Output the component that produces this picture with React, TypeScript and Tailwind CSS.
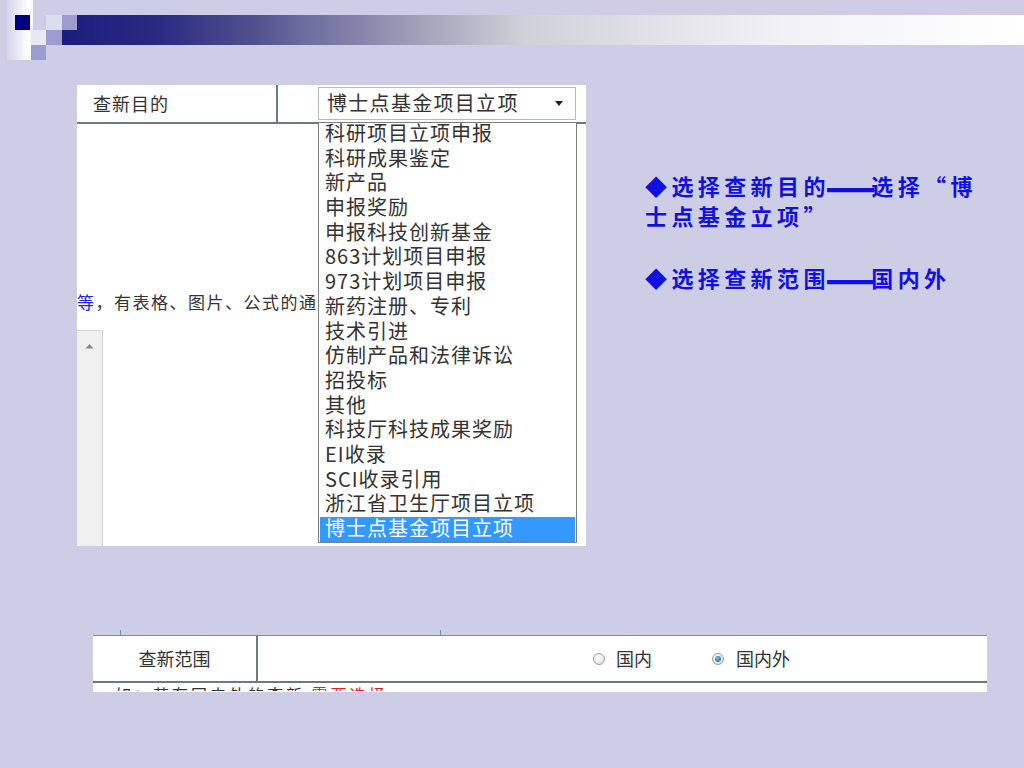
import React from "react";

const items = [
  "科研项目立项申报",
  "科研成果鉴定",
  "新产品",
  "申报奖励",
  "申报科技创新基金",
  "863计划项目申报",
  "973计划项目申报",
  "新药注册、专利",
  "技术引进",
  "仿制产品和法律诉讼",
  "招投标",
  "其他",
  "科技厅科技成果奖励",
  "EI收录",
  "SCI收录引用",
  "浙江省卫生厅项目立项",
  "博士点基金项目立项",
];

function Header() {
  return (
    <svg width="1024" height="60" viewBox="0 0 1024 60" className="block">
      <defs>
        <linearGradient id="strip" x1="0" y1="0" x2="1" y2="0">
          <stop offset="0" stopColor="#d4d4ec" />
          <stop offset="0.85" stopColor="#ffffff" />
          <stop offset="1" stopColor="#f4f4fa" />
        </linearGradient>
        <linearGradient id="bar" gradientUnits="userSpaceOnUse" x1="62" y1="0" x2="1024" y2="0">
          <stop offset="0" stopColor="#1c1c7e" />
          <stop offset="0.1" stopColor="#2a2a82" />
          <stop offset="0.2" stopColor="#50508f" />
          <stop offset="0.25" stopColor="#6b6b9f" />
          <stop offset="0.36" stopColor="#9c9cb6" />
          <stop offset="0.48" stopColor="#d0d0d8" />
          <stop offset="0.75" stopColor="#f2f2f6" />
          <stop offset="1" stopColor="#ffffff" />
        </linearGradient>
      </defs>
      <rect x="7" y="0" width="26" height="60" fill="url(#strip)" />
      <rect x="15" y="15" width="15" height="15" fill="#000080" />
      <rect x="46" y="15" width="16" height="15" fill="#dcdcef" />
      <rect x="62" y="15" width="15" height="15" fill="#9c9ccf" />
      <rect x="31" y="30" width="15" height="15" fill="#e8e8f4" />
      <rect x="46" y="30" width="16" height="15" fill="#9c9ccf" />
      <rect x="31" y="45" width="15" height="15" fill="#9c9ccf" />
      <rect x="77" y="15" width="947" height="15" fill="url(#bar)" />
      <rect x="62" y="30" width="962" height="15" fill="url(#bar)" />
    </svg>
  );
}

function Radio({ checked }: { checked?: boolean }) {
  return (
    <span className="inline-flex items-center justify-center w-[12px] h-[12px] rounded-full border border-[#9aa0a6] bg-[radial-gradient(circle_at_40%_35%,#ffffff,#d8d8d8)]">
      {checked && (
        <span className="w-[6px] h-[6px] rounded-full bg-[radial-gradient(circle_at_40%_35%,#7fb2e8,#1f5fa8)]" />
      )}
    </span>
  );
}

function Dash() {
  return (
    <span className="inline-block tracking-[0px] mx-[2px] scale-x-[1.35] scale-y-[2] -translate-y-[2px]">——</span>
  );
}

export default function App() {
  const cjk = { fontFamily: '"Noto Sans CJK SC", "Liberation Sans", sans-serif' };
  return (
    <div
      lang="zh-CN"
      className="w-[1024px] h-[768px] bg-[#cdcde6] overflow-hidden"
      style={cjk}
    >
      <Header />
      <div className="flex pt-[25px]">
        {/* left screenshot panel */}
        <div className="ml-[77px] w-[509px] h-[461px] bg-white relative flex flex-col">
          <div className="flex h-[39px] border-b-2 border-[#6b7b80]">
            <div className="w-[201px] border-r-2 border-[#6b7b80] pl-[16px] flex items-center text-[18px] tracking-[1px] text-[#333] leading-none pb-[2px]">
              查新目的
            </div>
          </div>
          <div className="h-[166px]" />
          <div className="text-[17px] leading-[24px] text-[#333] whitespace-nowrap overflow-hidden w-[241px] tracking-[1.5px]">
            <span className="text-[#2020d8]">等</span>，有表格、图片、公式的通
          </div>
          <div className="h-[16px]" />
          <div className="flex-1 flex">
            <div className="w-[26px] bg-[#f0f0f0] border-t border-r border-[#d4d4d4] flex justify-center pt-[12px]">
              <svg width="9" height="6" viewBox="0 0 9 6">
                <path d="M0.5 5.5 L4.5 1 L8.5 5.5 Z" fill="#8a8a8a" />
              </svg>
            </div>
          </div>

          {/* select box */}
          <div className="absolute left-[241px] top-[2px] w-[258px] h-[33px] border border-[#aebccb] bg-white flex items-center pl-[8px] pr-[12px] text-[20px] text-[#333]">
            <span className="flex-1 tracking-[1.3px] -mt-[2px]">博士点基金项目立项</span>
            <svg width="8" height="5" viewBox="0 0 8 5">
              <path d="M0 0 H8 L4 5 Z" fill="#222" />
            </svg>
          </div>

          {/* dropdown list */}
          <div className="absolute left-[241px] top-[37px] w-[259px] h-[421px] border border-[#7d7d7d] bg-white px-px">
            <div className="-mt-[1px]">
              {items.map((it, i) => (
                <div
                  key={it}
                  className={
                    "h-[24.7px] leading-[24.7px] pl-[5px] text-[20px] tracking-[1px] whitespace-nowrap " +
                    (i === items.length - 1 ? "bg-[#3399ff] text-white" : "text-[#333]")
                  }
                >
                  <span className="relative -top-[1px]">{it}</span>
                </div>
              ))}
            </div>
          </div>
        </div>

        {/* right notes */}
        <div className="ml-[59px] mt-[85px] text-[22px] leading-[30px] font-bold text-[#1010e0] tracking-[4.4px] whitespace-nowrap">
          <div>◆选择查新目的<Dash />选择“博</div>
          <div>士点基金立项”</div>
          <div className="mt-[32px]">◆选择查新范围<Dash />国内外</div>
        </div>
      </div>

      {/* bottom screenshot panel */}
      <div className="mt-[89px] ml-[93px] w-[894px] h-[57px] bg-white relative flex flex-col border-t border-[#7e8e94]">
        <span className="absolute left-[27px] -top-[6px] w-px h-[5px] bg-[#7e8e94]" />
        <span className="absolute left-[347px] -top-[6px] w-px h-[5px] bg-[#7e8e94]" />
        <div className="flex h-[47px] border-b-2 border-[#6b7b80]">
          <div className="w-[165px] border-r-2 border-[#6b7b80] flex items-center justify-center text-[18px] text-[#333]">
            查新范围
          </div>
          <div className="flex items-center text-[18px] text-[#333]">
            <span className="ml-[335px] flex"><Radio /></span>
            <span className="ml-[11px]">国内</span>
            <span className="ml-[60px] flex"><Radio checked /></span>
            <span className="ml-[12px]">国内外</span>
          </div>
        </div>
        <div className="h-[8px] overflow-hidden text-[16px] leading-[22px] text-[#333] pl-[22px] whitespace-nowrap tracking-[3px]">
          <span className="block">
            如：若有国内外的查新 <span className="text-[#e02020]">需要选择</span>
          </span>
        </div>
      </div>
    </div>
  );
}
